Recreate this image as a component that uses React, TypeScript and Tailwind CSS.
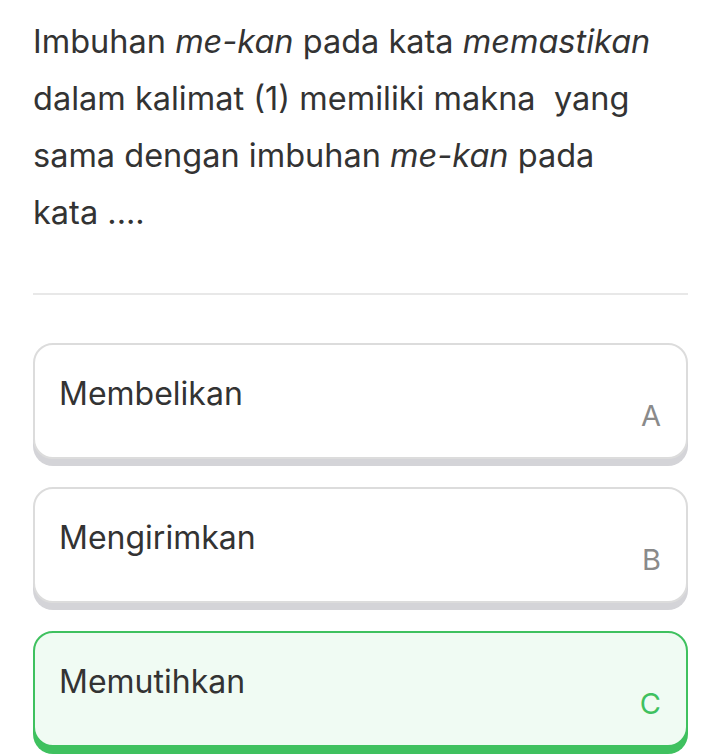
import React from 'react';

interface Option {
  label: string;
  text: string;
  correct?: boolean;
}

const options: Option[] = [
  { label: 'A', text: 'Membelikan' },
  { label: 'B', text: 'Mengirimkan' },
  { label: 'C', text: 'Memutihkan', correct: true },
];

const OptionCard: React.FC<{ option: Option }> = ({ option }) => {
  const boxClass = option.correct
    ? 'border-[#3fc15f] bg-[#f0fbf3] shadow-[0_7px_0_#3fc15f]'
    : 'border-[#dcdcdc] bg-white shadow-[0_7px_0_#d4d4d8]';
  const labelClass = option.correct ? 'text-[#3fc15f]' : 'text-[#8a8a8a]';

  return (
    <div className={`flex flex-col rounded-[20px] border-2 pl-6 pr-[25px] pt-[30px] pb-6 ${boxClass}`}>
      <span className="text-[32px] leading-[38px] text-[#333333]">{option.text}</span>
      <span className={`-mt-[15px] self-end text-[29px] leading-[35px] ${labelClass}`}>{option.label}</span>
    </div>
  );
};

export default function App() {
  return (
    <div className="min-h-screen bg-white pl-[33px] pt-[13px] pr-[31px]" style={{ fontFamily: 'Inter, "Noto Sans", sans-serif' }}>
      <p className="text-[32.5px] leading-[57px] text-[#333333]">
        Imbuhan <i>me-kan</i> pada kata <i>memastikan</i> dalam kalimat (1) memiliki makna&nbsp; yang sama dengan
        imbuhan <i>me-kan</i> pada kata&nbsp;....
      </p>

      <div className="mt-[52px] h-[2px] bg-[#e8e8e8]" />

      <div className="mt-[48px] flex flex-col gap-[28px]">
        {options.map((opt) => (
          <OptionCard key={opt.label} option={opt} />
        ))}
      </div>
    </div>
  );
}
